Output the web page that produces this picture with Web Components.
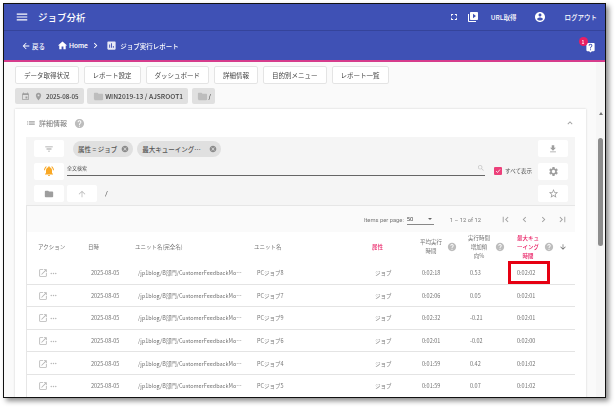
<!DOCTYPE html>
<html lang="ja">
<head>
<meta charset="utf-8">
<title>ジョブ分析</title>
<style>
  html, body { margin: 0; height: 100%; background: #fff; overflow: hidden; }
  body { font-family: "Noto Sans CJK JP", "Roboto", "Liberation Sans", sans-serif; }
</style>
</head>
<body>
<report-window>
  <top-bar slot="top"></top-bar>
  <sub-bar slot="top"></sub-bar>
  <nav-buttons>
    <nav-button>データ取得状況</nav-button>
    <nav-button>レポート設定</nav-button>
    <nav-button>ダッシュボード</nav-button>
    <nav-button>詳細情報</nav-button>
    <nav-button>目的別メニュー</nav-button>
    <nav-button>レポート一覧</nav-button>
  </nav-buttons>
  <scope-chips></scope-chips>
  <detail-card>
    <filter-panel></filter-panel>
    <job-table></job-table>
  </detail-card>
</report-window>

<script>
// アイコン (Material のパス)
const ICONS = {
  menu: 'M3 18h18v-2H3v2zm0-5h18v-2H3v2zm0-7v2h18V6H3z',
  back: 'M20 11H7.83l5.59-5.59L12 4l-8 8 8 8 1.41-1.41L7.83 13H20v-2z',
  home: 'M10 20v-6h4v6h5v-8h3L12 3 2 12h3v8z',
  chevronRight: 'M10 6L8.59 7.41 13.17 12l-4.58 4.59L10 18l6-6z',
  chevronLeft: 'M15.41 7.41L14 6l-6 6 6 6 1.41-1.41L10.83 12z',
  assessment: 'M19 3H5c-1.1 0-2 .9-2 2v14c0 1.1.9 2 2 2h14c1.1 0 2-.9 2-2V5c0-1.1-.9-2-2-2zM9 17H7v-7h2v7zm4 0h-2V7h2v10zm4 0h-2v-4h2v4z',
  fullscreen: 'M7 14H5v5h5v-2H7v-3zm-2-4h2V7h3V5H5v5zm12 7h-3v2h5v-5h-2v3zM14 5v2h3v3h2V5h-5z',
  video: 'M4 6H2v14c0 1.1.9 2 2 2h14v-2H4V6zm16-4H8c-1.1 0-2 .9-2 2v12c0 1.1.9 2 2 2h12c1.1 0 2-.9 2-2V4c0-1.1-.9-2-2-2zm-8 12.5v-9l6 4.5-6 4.5z',
  account: 'M12 2C6.48 2 2 6.48 2 12s4.48 10 10 10 10-4.48 10-10S17.52 2 12 2zm0 3c1.66 0 3 1.34 3 3s-1.34 3-3 3-3-1.34-3-3 1.34-3 3-3zm0 14.2c-2.5 0-4.71-1.28-6-3.22.03-1.99 4-3.08 6-3.08 1.99 0 5.97 1.09 6 3.08-1.29 1.94-3.5 3.22-6 3.22z',
  liveHelp: 'M19 2H5c-1.11 0-2 .9-2 2v14c0 1.1.89 2 2 2h4l3 3 3-3h4c1.1 0 2-.9 2-2V4c0-1.1-.9-2-2-2zm-6 16h-2v-2h2v2zm2.07-7.75l-.9.92C13.45 11.9 13 12.5 13 14h-2v-.5c0-1.1.45-2.1 1.17-2.83l1.24-1.26c.37-.36.59-.86.59-1.41 0-1.1-.9-2-2-2s-2 .9-2 2H8c0-2.21 1.79-4 4-4s4 1.79 4 4c0 .88-.36 1.68-.93 2.25z',
  help: 'M12 2C6.48 2 2 6.48 2 12s4.48 10 10 10 10-4.48 10-10S17.52 2 12 2zm1 17h-2v-2h2v2zm2.07-7.75l-.9.92C13.45 12.9 13 13.5 13 15h-2v-.5c0-1.1.45-2.1 1.17-2.83l1.24-1.26c.37-.36.59-.86.59-1.41 0-1.1-.9-2-2-2s-2 .9-2 2H8c0-2.21 1.79-4 4-4s4 1.79 4 4c0 .88-.36 1.68-.93 2.25z',
  cancel: 'M12 2C6.47 2 2 6.47 2 12s4.47 10 10 10 10-4.47 10-10S17.53 2 12 2zm5 13.59L15.59 17 12 13.41 8.41 17 7 15.59 10.59 12 7 8.41 8.41 7 12 10.59 15.59 7 17 8.41 13.41 12 17 15.59z',
  event: 'M17 12h-5v5h5v-5zM16 1v2H8V1H6v2H5c-1.11 0-1.99.9-1.99 2L3 19c0 1.1.89 2 2 2h14c1.1 0 2-.9 2-2V5c0-1.1-.9-2-2-2h-1V1h-2zm3 18H5V8h14v11z',
  place: 'M12 2C8.13 2 5 5.13 5 9c0 5.25 7 13 7 13s7-7.75 7-13c0-3.87-3.13-7-7-7zm0 9.5a2.5 2.5 0 0 1 0-5 2.5 2.5 0 0 1 0 5z',
  folder: 'M10 4H4c-1.1 0-1.99.9-1.99 2L2 18c0 1.1.9 2 2 2h16c1.1 0 2-.9 2-2V8c0-1.1-.9-2-2-2h-8l-2-2z',
  filter: 'M10 18h4v-2h-4v2zM3 6v2h18V6H3zm3 7h12v-2H6v2z',
  list: 'M3 13h2v-2H3v2zm0 4h2v-2H3v2zm0-8h2V7H3v2zm4 4h14v-2H7v2zm0 4h14v-2H7v2zM7 7v2h14V7H7z',
  expandLess: 'M12 8l-6 6 1.41 1.41L12 10.83l4.59 4.58L18 14z',
  download: 'M19 9h-4V3H9v6H5l7 7 7-7zM5 18v2h14v-2H5z',
  settings: 'M19.14 12.94c.04-.3.06-.61.06-.94 0-.32-.02-.64-.07-.94l2.03-1.58c.18-.14.23-.41.12-.61l-1.92-3.32c-.12-.22-.37-.29-.59-.22l-2.39.96c-.5-.38-1.03-.7-1.62-.94l-.36-2.54c-.04-.24-.24-.41-.48-.41h-3.84c-.24 0-.43.17-.47.41l-.36 2.54c-.59.24-1.13.57-1.62.94l-2.39-.96c-.22-.08-.47 0-.59.22L2.74 8.87c-.12.21-.08.47.12.61l2.03 1.58c-.05.3-.09.63-.09.94s.02.64.07.94l-2.03 1.58c-.18.14-.23.41-.12.61l1.92 3.32c.12.22.37.29.59.22l2.39-.96c.5.38 1.03.7 1.62.94l.36 2.54c.05.24.24.41.48.41h3.84c.24 0 .44-.17.47-.41l.36-2.54c.59-.24 1.13-.56 1.62-.94l2.39.96c.22.08.47 0 .59-.22l1.92-3.32c.12-.22.07-.47-.12-.61l-2.01-1.58zM12 15.6c-1.98 0-3.6-1.62-3.6-3.6s1.62-3.6 3.6-3.6 3.6 1.62 3.6 3.6-1.62 3.6-3.6 3.6z',
  star: 'M22 9.24l-7.19-.62L12 2 9.19 8.63 2 9.24l5.46 4.73L5.82 21 12 17.27 18.18 21l-1.63-7.03L22 9.24zM12 15.4l-3.76 2.27 1-4.28-3.32-2.88 4.38-.38L12 6.1l1.71 4.04 4.38.38-3.32 2.88 1 4.28L12 15.4z',
  up: 'M4 12l1.41 1.41L11 7.83V20h2V7.83l5.58 5.59L20 12l-8-8-8 8z',
  down: 'M20 12l-1.41-1.41L13 16.17V4h-2v12.17l-5.58-5.59L4 12l8 8 8-8z',
  search: 'M15.5 14h-.79l-.28-.27C15.41 12.59 16 11.11 16 9.5 16 5.91 13.09 3 9.5 3S3 5.91 3 9.5 5.91 16 9.5 16c1.61 0 3.09-.59 4.23-1.57l.27.28v.79l5 4.99L20.49 19l-4.99-5zm-6 0C7.01 14 5 11.99 5 9.5S7.01 5 9.5 5 14 7.01 14 9.5 11.99 14 9.5 14z',
  open: 'M19 19H5V5h7V3H5c-1.11 0-2 .9-2 2v14c0 1.1.89 2 2 2h14c1.1 0 2-.9 2-2v-7h-2v7zM14 3v2h3.59l-9.83 9.83 1.41 1.41L19 6.41V10h2V3h-7z',
  firstPage: 'M18.41 16.59L13.82 12l4.59-4.59L17 6l-6 6 6 6zM6 6h2v12H6z',
  lastPage: 'M5.59 7.41L10.18 12l-4.59 4.59L7 18l6-6-6-6zM16 6h2v12h-2z',
  more: 'M6 10c-1.1 0-2 .9-2 2s.9 2 2 2 2-.9 2-2-.9-2-2-2zm12 0c-1.1 0-2 .9-2 2s.9 2 2 2 2-.9 2-2-.9-2-2-2zm-6 0c-1.1 0-2 .9-2 2s.9 2 2 2 2-.9 2-2-.9-2-2-2z',
  bell: 'M12 22c1.1 0 2-.9 2-2h-4c0 1.1.89 2 2 2zm6-6v-5c0-3.07-1.64-5.64-4.5-6.32V4c0-.83-.67-1.5-1.5-1.5s-1.5.67-1.5 1.5v.68C7.63 5.36 6 7.92 6 11v5l-2 2v1h16v-1l-2-2zM7.58 4.08L6.15 2.65C3.75 4.48 2.17 7.3 2.03 10.5h2c.15-2.65 1.51-4.97 3.55-6.42zm12.39 6.42h2c-.15-3.2-1.73-6.02-4.12-7.85l-1.42 1.43c2.02 1.45 3.39 3.77 3.54 6.42z'
};

const icon = (name, size, color) =>
  `<svg width="${size}" height="${size}" viewBox="0 0 24 24" fill="${color}" style="display:block;flex:none"><path d="${ICONS[name]}"/></svg>`;

// 1. 外枠 (スクリーンショットの黒枠)
class ReportWindow extends HTMLElement {
  constructor() {
    super();
    this.attachShadow({ mode: 'open' });
    this.shadowRoot.innerHTML = `
      <style>
        :host {
          display: flex; flex-direction: column;
          box-sizing: border-box;
          width: 603px; height: 395px;
          margin: 3px 0 0 3px;
          border: 1px solid #111;
          box-shadow: 3px 3px 5px rgba(0, 0, 0, .45);
          background: #fafafa;
          overflow: hidden;
          filter: blur(.3px);
        }
        .pink { height: 2px; background: #d63c8c; flex: none; }
        .body { flex: 1; display: flex; min-height: 0; }
        .main { flex: 1; min-width: 0; padding: 4px 10px 0 11px; overflow: hidden; }
        .scroll { width: 9px; flex: none; background: #f6f6f6; display: flex; flex-direction: column; align-items: center; }
        .arrow {
          width: 0; height: 0; margin-top: 50px;
          border: 2.5px solid transparent; border-top: 0; border-bottom: 3px solid #777;
        }
        .thumb { width: 5px; height: 108px; margin-top: 23px; border-radius: 3px; background: #8d8d8d; }
      </style>
      <slot name="top"></slot>
      <div class="pink"></div>
      <div class="body">
        <div class="main"><slot></slot></div>
        <div class="scroll"><div class="arrow"></div><div class="thumb"></div></div>
      </div>
    `;
  }
}

// 2. 上部バー
class TopBar extends HTMLElement {
  constructor() {
    super();
    this.attachShadow({ mode: 'open' });
    this.shadowRoot.innerHTML = `
      <style>
        :host {
          display: flex; align-items: center;
          height: 27px; padding: 0 8px 0 11px;
          background: #3f51b5; color: #fff;
          border-bottom: 1px solid #35449b;
          box-sizing: border-box;
        }
        .title { font-size: 9.5px; font-weight: 500; margin-left: 9px; flex: 1; }
        .text { font-size: 6.5px; font-weight: 500; }
      </style>
      ${icon('menu', 14, '#fff')}
      <span class="title">ジョブ分析</span>
      ${icon('fullscreen', 10, '#fff')}
      <span style="width:8px"></span>
      ${icon('video', 12, '#fff')}
      <span style="width:12px"></span>
      <span class="text">URL取得</span>
      <span style="width:17px"></span>
      ${icon('account', 12, '#fff')}
      <span style="width:19px"></span>
      <span class="text">ログアウト</span>
    `;
  }
}

// 3. パンくずバー
class SubBar extends HTMLElement {
  constructor() {
    super();
    this.attachShadow({ mode: 'open' });
    this.shadowRoot.innerHTML = `
      <style>
        :host {
          display: flex; align-items: center;
          height: 29px; padding: 0 9px 0 17px;
          background: #3f51b5; color: #fff;
          font-size: 6.5px; font-weight: 500;
          box-sizing: border-box;
        }
        .item { display: flex; align-items: center; }
        .grow { flex: 1; }
        .help { position: relative; margin-top: 3px; }
        .badge {
          position: absolute; left: -6.5px; top: -4.5px;
          width: 9px; height: 9px; border-radius: 50%;
          background: #e91e63; color: #fff;
          font-size: 5px; line-height: 9px; text-align: center;
        }
      </style>
      <span class="item">${icon('back', 10, '#fff')}<span style="margin-left:1px">戻る</span></span>
      <span class="item" style="margin-left:12px">${icon('home', 11, '#fff')}<span style="margin-left:1px;font-family:Roboto,sans-serif;font-size:7px">Home</span></span>
      <span class="item" style="margin-left:2px">${icon('chevronRight', 11, '#fff')}</span>
      <span class="item" style="margin-left:5.5px">${icon('assessment', 11, '#e8eaf6')}<span style="margin-left:3px">ジョブ実行レポート</span></span>
      <span class="grow"></span>
      <span class="help">${icon('liveHelp', 11, '#fff')}<span class="badge">1</span></span>
    `;
  }
}

// 4. レポート切替ボタン
class NavButtons extends HTMLElement {
  constructor() {
    super();
    this.attachShadow({ mode: 'open' });
    this.shadowRoot.innerHTML = `
      <style>:host { display: flex; gap: 5px; }</style>
      <slot></slot>
    `;
  }
}

class NavButton extends HTMLElement {
  constructor() {
    super();
    this.attachShadow({ mode: 'open' });
    this.shadowRoot.innerHTML = `
      <style>
        :host {
          display: flex; align-items: center;
          height: 18px; padding: 0 8px;
          box-sizing: border-box;
          background: #fff; border: 1px solid #e4e4e4; border-radius: 2px;
          font-size: 6.5px; color: #444; white-space: nowrap;
        }
      </style>
      <slot></slot>
    `;
  }
}

// 5. 日付・フォルダのチップ
class ScopeChips extends HTMLElement {
  constructor() {
    super();
    this.attachShadow({ mode: 'open' });
    this.shadowRoot.innerHTML = `
      <style>
        :host { display: flex; gap: 3.5px; margin-top: 4px; }
        .chip {
          display: flex; align-items: center; gap: 1px;
          height: 16px; padding: 0 5px;
          background: #e0e0e0; border-radius: 2px;
          font-size: 6.2px; font-weight: 500; color: #424242;
          white-space: nowrap;
        }
      </style>
      <div class="chip" style="padding-left:6px">${icon('event', 9, '#9e9e9e')}<span style="width:2px"></span>${icon('place', 9, '#9e9e9e')}<span style="margin-left:2px">2025-08-05</span></div>
      <div class="chip" style="padding-left:6px;font-size:6.7px">${icon('folder', 11, '#bdbdbd')}<span>WIN2019-13 / AJSROOT1</span></div>
      <div class="chip" style="padding-left:5px;padding-right:4px">${icon('folder', 11, '#bdbdbd')}<span>/</span></div>
    `;
  }
}

// 6. 詳細情報カード
class DetailCard extends HTMLElement {
  constructor() {
    super();
    this.attachShadow({ mode: 'open' });
    this.shadowRoot.innerHTML = `
      <style>
        :host {
          display: block; margin-top: 5px; padding: 0 11px;
          background: #fff;
          box-shadow: 0 0 2px rgba(0, 0, 0, .18);
        }
        .head {
          display: flex; align-items: center;
          height: 28px; color: #757575; font-size: 7px;
        }
        .label { margin-left: 3px; }
        .grow { flex: 1; }
      </style>
      <div class="head">
        ${icon('list', 10, '#9e9e9e')}
        <span class="label">詳細情報</span>
        <span style="width:7px"></span>
        ${icon('help', 11, '#bdbdbd')}
        <span class="grow"></span>
        ${icon('expandLess', 10, '#9e9e9e')}
      </div>
      <slot></slot>
    `;
  }
}

// 7. フィルタパネル
class FilterPanel extends HTMLElement {
  constructor() {
    super();
    this.attachShadow({ mode: 'open' });
    const btn = (name, color, size = 10) => `<span class="btn">${icon(name, size, color)}</span>`;
    const chip = (text, gap) => `<span class="chip" style="gap:${gap}px">${text}${icon('cancel', 8, '#8a8a8a')}</span>`;
    this.shadowRoot.innerHTML = `
      <style>
        :host {
          display: flex; flex-direction: column;
          padding: 3px 7px 3px 8px;
          background: #f5f5f5;
          color: #555;
        }
        .row { display: flex; align-items: center; height: 17px; }
        .row + .row { margin-top: 5.5px; }
        .btn {
          display: flex; align-items: center; justify-content: center;
          width: 30px; height: 17px; flex: none;
          background: #fff; border-radius: 2px;
        }
        .chip {
          display: flex; align-items: center;
          height: 16px; padding: 0 4px 0 5px;
          background: #e0e0e0; border-radius: 8px;
          font-size: 6.5px; font-weight: 500; color: #555; white-space: nowrap;
        }
        .grow { flex: 1; }
        .search {
          flex: 1; display: flex; align-items: center; justify-content: space-between;
          height: 14px; margin: 0 3px 5px 3px;
          border-bottom: 1px solid #666; font-size: 5px; color: #555; line-height: 8px;
          box-sizing: border-box;
        }
        .check {
          width: 8px; height: 8px; margin: 0 3px 0 6px; flex: none;
          background: #ec407a; border-radius: 1px;
          display: flex; align-items: center; justify-content: center;
        }
        .check svg { display: block; }
        .all { font-size: 5.5px; color: #555; white-space: nowrap; margin-right: 6px; }
        .slash { font: 7px Roboto, sans-serif; margin-left: 8px; }
      </style>
      <div class="row">
        ${btn('filter', '#9e9e9e')}
        <span style="width:9px"></span>
        ${chip('属性 = ジョブ', 4)}
        <span style="width:4px"></span>
        ${chip('最大キューイング…', 8)}
        <span class="grow"></span>
        ${btn('download', '#9e9e9e')}
      </div>
      <div class="row">
        ${btn('bell', '#f9a825', 12)}
        <div class="search"><span>全文検索</span>${icon('search', 8, '#c4c4c4')}</div>
        <span class="check"><svg width="6" height="6" viewBox="0 0 24 24" fill="none" stroke="#fff" stroke-width="3"><path d="M4 12l6 6L20 6"/></svg></span>
        <span class="all">すべて表示</span>
        ${btn('settings', '#9e9e9e', 11)}
      </div>
      <div class="row">
        ${btn('folder', '#9e9e9e')}
        <span style="width:3px"></span>
        ${btn('up', '#bdbdbd')}
        <span class="slash">/</span>
        <span class="grow"></span>
        ${btn('star', '#9e9e9e', 11)}
      </div>
    `;
  }
}

// 8. ジョブ一覧テーブル
class JobTable extends HTMLElement {
  constructor() {
    super();
    this.attachShadow({ mode: 'open' });
    this.rows = [
      ['PCジョブ8', '0:02:18', '0.53', '0:02:02'],
      ['PCジョブ7', '0:02:06', '0.05', '0:02:01'],
      ['PCジョブ9', '0:02:32', '-0.21', '0:02:01'],
      ['PCジョブ6', '0:02:01', '-0.02', '0:02:00'],
      ['PCジョブ4', '0:01:59', '0.42', '0:01:02'],
      ['PCジョブ5', '0:01:59', '0.07', '0:01:02']
    ];
    this.render();
  }

  render() {
    const rowList = this.rows.map((r, i) => `
      <div class="grid row">
        <div class="c act">${icon('open', 10, '#b5b5b5')}${icon('more', 9, '#b5b5b5')}</div>
        <div class="c pad4">2025-08-05</div>
        <div class="c pad4">/jp1blog/B部門/CustomerFeedbackMo…</div>
        <div class="c pad4">${r[0]}</div>
        <div class="c job">ジョブ</div>
        <div class="c pad6">${r[1]}</div>
        <div class="c pad5">${r[2]}</div>
        <div class="c pad5 max">${r[3]}${i === 0 ? '<span class="mark"></span>' : ''}</div>
      </div>
    `).join('');

    this.shadowRoot.innerHTML = `
      <style>
        :host {
          display: block;
          border: 1px solid #e6e6e6; border-bottom: 0; border-right: 0;
          font-size: 5.5px; color: #757575;
          background: #fff;
        }
        .pager {
          display: flex; align-items: center; justify-content: flex-end;
          height: 26px; padding-right: 7px; padding-top: 1px; box-sizing: border-box;
          background: #fafafa;
          font: 5.8px Roboto, sans-serif; color: #777;
        }
        .select {
          display: flex; align-items: center; justify-content: space-between;
          width: 27px; height: 9px; margin: 0 16px 0 3px;
          border-bottom: 1px solid #888; color: #444;
        }
        .caret { width: 0; height: 0; border: 2px solid transparent; border-top: 2.5px solid #666; border-bottom: 0; margin-right: 2px; }
        .pg { display: flex; gap: 8px; margin-left: 19px; }
        .grid {
          display: grid;
          grid-template-columns: 60px 47px 119px 115px 48px 49px 47px 64px;
        }
        .head { height: 30px; align-items: center; }
        .h { display: flex; align-items: center; white-space: nowrap; padding-left: 1px; }
        .h.first { padding-left: 11px; }
        .multi { text-align: center; line-height: 9px; }
        .avg { padding-left: 4px; gap: 5px; }
        .trend { padding-left: 3px; gap: 5px; }
        .sort { padding-left: 5px; gap: 5px; }
        .pink { color: #e91e63; font-weight: 500; }
        .row { height: 22.6px; box-sizing: border-box; padding-top: 1px; border-bottom: 1px solid #e4e4e4; align-items: center; }
        .c { white-space: nowrap; overflow: hidden; }
        .act { display: flex; align-items: center; gap: 1px; padding-left: 11px; }
        .pad4 { padding-left: 4px; }
        .job { padding-left: 7px; }
        .pad6 { padding-left: 6px; }
        .pad5 { padding-left: 5px; }
        .max { overflow: visible; position: relative; height: 100%; display: flex; align-items: center; }
        .mark {
          position: absolute; left: -4px; top: -2px;
          width: 42px; height: 23px; box-sizing: border-box;
          border: 3px solid #e60012;
        }
      </style>
      <div class="pager">
        <span>Items per page:</span>
        <span class="select"><span>50</span><span class="caret"></span></span>
        <span>1 – 12 of 12</span>
        <span class="pg">
          ${icon('firstPage', 11, '#a0a0a0')}
          ${icon('chevronLeft', 11, '#a0a0a0')}
          ${icon('chevronRight', 11, '#a0a0a0')}
          ${icon('lastPage', 11, '#a0a0a0')}
        </span>
      </div>
      <div class="grid head">
        <div class="h first">アクション</div>
        <div class="h">日時</div>
        <div class="h">ユニット名(完全名)</div>
        <div class="h">ユニット名</div>
        <div class="h pink" style="padding-left:4px">属性</div>
        <div class="h avg"><span class="multi">平均実行<br>時間</span>${icon('help', 10, '#bdbdbd')}</div>
        <div class="h trend"><span class="multi">実行時間<br>増加傾<br>向%</span>${icon('help', 10, '#bdbdbd')}</div>
        <div class="h sort"><span class="multi pink">最大キュ<br>ーイング<br>時間</span>${icon('help', 10, '#bdbdbd')}${icon('down', 8, '#666')}</div>
      </div>
      ${rowList}
    `;
  }
}

customElements.define('report-window', ReportWindow);
customElements.define('top-bar', TopBar);
customElements.define('sub-bar', SubBar);
customElements.define('nav-buttons', NavButtons);
customElements.define('nav-button', NavButton);
customElements.define('scope-chips', ScopeChips);
customElements.define('detail-card', DetailCard);
customElements.define('filter-panel', FilterPanel);
customElements.define('job-table', JobTable);
</script>
</body>
</html>
